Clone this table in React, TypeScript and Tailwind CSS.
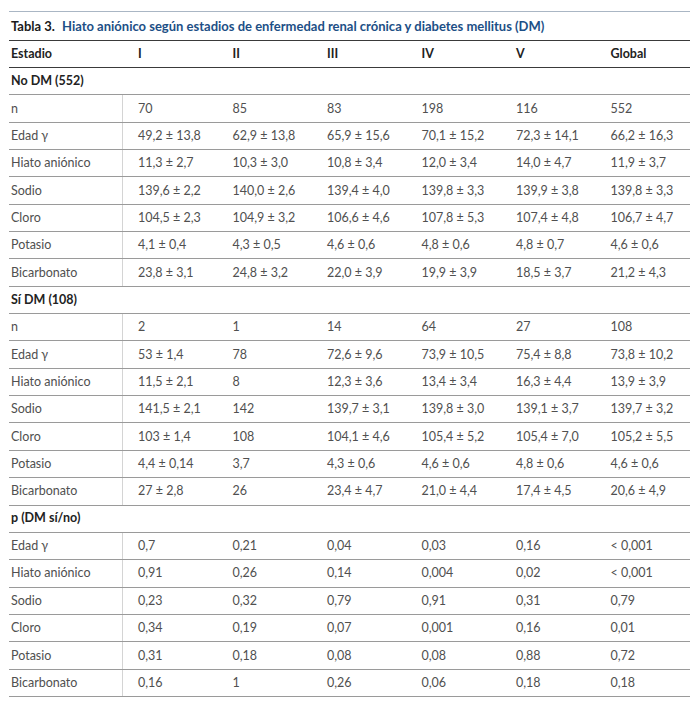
const cols = ['I', 'II', 'III', 'IV', 'V', 'Global'];

type Row = [string, string, string, string, string, string, string];

const sections: { title: string; rows: Row[] }[] = [
  {
    title: 'No DM (552)',
    rows: [
      ['n', '70', '85', '83', '198', '116', '552'],
      ['Edad γ', '49,2 ± 13,8', '62,9 ± 13,8', '65,9 ± 15,6', '70,1 ± 15,2', '72,3 ± 14,1', '66,2 ± 16,3'],
      ['Hiato aniónico', '11,3 ± 2,7', '10,3 ± 3,0', '10,8 ± 3,4', '12,0 ± 3,4', '14,0 ± 4,7', '11,9 ± 3,7'],
      ['Sodio', '139,6 ± 2,2', '140,0 ± 2,6', '139,4 ± 4,0', '139,8 ± 3,3', '139,9 ± 3,8', '139,8 ± 3,3'],
      ['Cloro', '104,5 ± 2,3', '104,9 ± 3,2', '106,6 ± 4,6', '107,8 ± 5,3', '107,4 ± 4,8', '106,7 ± 4,7'],
      ['Potasio', '4,1 ± 0,4', '4,3 ± 0,5', '4,6 ± 0,6', '4,8 ± 0,6', '4,8 ± 0,7', '4,6 ± 0,6'],
      ['Bicarbonato', '23,8 ± 3,1', '24,8 ± 3,2', '22,0 ± 3,9', '19,9 ± 3,9', '18,5 ± 3,7', '21,2 ± 4,3'],
    ],
  },
  {
    title: 'Sí DM (108)',
    rows: [
      ['n', '2', '1', '14', '64', '27', '108'],
      ['Edad γ', '53 ± 1,4', '78', '72,6 ± 9,6', '73,9 ± 10,5', '75,4 ± 8,8', '73,8 ± 10,2'],
      ['Hiato aniónico', '11,5 ± 2,1', '8', '12,3 ± 3,6', '13,4 ± 3,4', '16,3 ± 4,4', '13,9 ± 3,9'],
      ['Sodio', '141,5 ± 2,1', '142', '139,7 ± 3,1', '139,8 ± 3,0', '139,1 ± 3,7', '139,7 ± 3,2'],
      ['Cloro', '103 ± 1,4', '108', '104,1 ± 4,6', '105,4 ± 5,2', '105,4 ± 7,0', '105,2 ± 5,5'],
      ['Potasio', '4,4 ± 0,14', '3,7', '4,3 ± 0,6', '4,6 ± 0,6', '4,8 ± 0,6', '4,6 ± 0,6'],
      ['Bicarbonato', '27 ± 2,8', '26', '23,4 ± 4,7', '21,0 ± 4,4', '17,4 ± 4,5', '20,6 ± 4,9'],
    ],
  },
  {
    title: 'p (DM sí/no)',
    rows: [
      ['Edad γ', '0,7', '0,21', '0,04', '0,03', '0,16', '< 0,001'],
      ['Hiato aniónico', '0,91', '0,26', '0,14', '0,004', '0,02', '< 0,001'],
      ['Sodio', '0,23', '0,32', '0,79', '0,91', '0,31', '0,79'],
      ['Cloro', '0,34', '0,19', '0,07', '0,001', '0,16', '0,01'],
      ['Potasio', '0,31', '0,18', '0,08', '0,08', '0,88', '0,72'],
      ['Bicarbonato', '0,16', '1', '0,26', '0,06', '0,18', '0,18'],
    ],
  },
];

const grid = 'grid grid-cols-[114px_repeat(6,1fr)]';

export default function App() {
  return (
    <div className="w-[700px] h-[708px] bg-white pt-[11px] pl-[9px] pr-[10px] font-['Lato','Open_Sans',sans-serif] text-[12.5px]">
      {/* Title */}
      <div className="h-[30px] border-t border-[#aab6c4] border-b border-b-[#3a3a3a] flex items-center pl-[2px] pt-[1px] font-bold text-[13px]">
        <span className="text-[#1a1a1a]">Tabla 3.</span>
        <span className="ml-[7px] text-[#1d4f86]">
          Hiato aniónico según estadios de enfermedad renal crónica y diabetes mellitus (DM)
        </span>
      </div>

      {/* Header */}
      <div className={`${grid} h-[27px] border-b border-[#3a3a3a] items-center font-bold text-[#222]`}>
        <div className="pl-[2px]">Estadio</div>
        {cols.map((c) => (
          <div key={c} className="pl-[15px]">
            {c}
          </div>
        ))}
      </div>

      {sections.map((s) => (
        <div key={s.title}>
          <div className="h-[27.35px] border-b border-[#9a9a9a] flex items-center pl-[2px] font-bold text-[#222]">
            {s.title}
          </div>
          {s.rows.map((r, i) => (
            <div key={i} className={`${grid} h-[27.35px] border-b border-[#9a9a9a] text-[#505050]`}>
              <div className="pl-[2px] pt-[1px] flex items-center border-r border-[#d4d4d4]">{r[0]}</div>
              {r.slice(1).map((v, j) => (
                <div key={j} className="pl-[15px] pt-[1px] flex items-center">
                  {v}
                </div>
              ))}
            </div>
          ))}
        </div>
      ))}
    </div>
  );
}
